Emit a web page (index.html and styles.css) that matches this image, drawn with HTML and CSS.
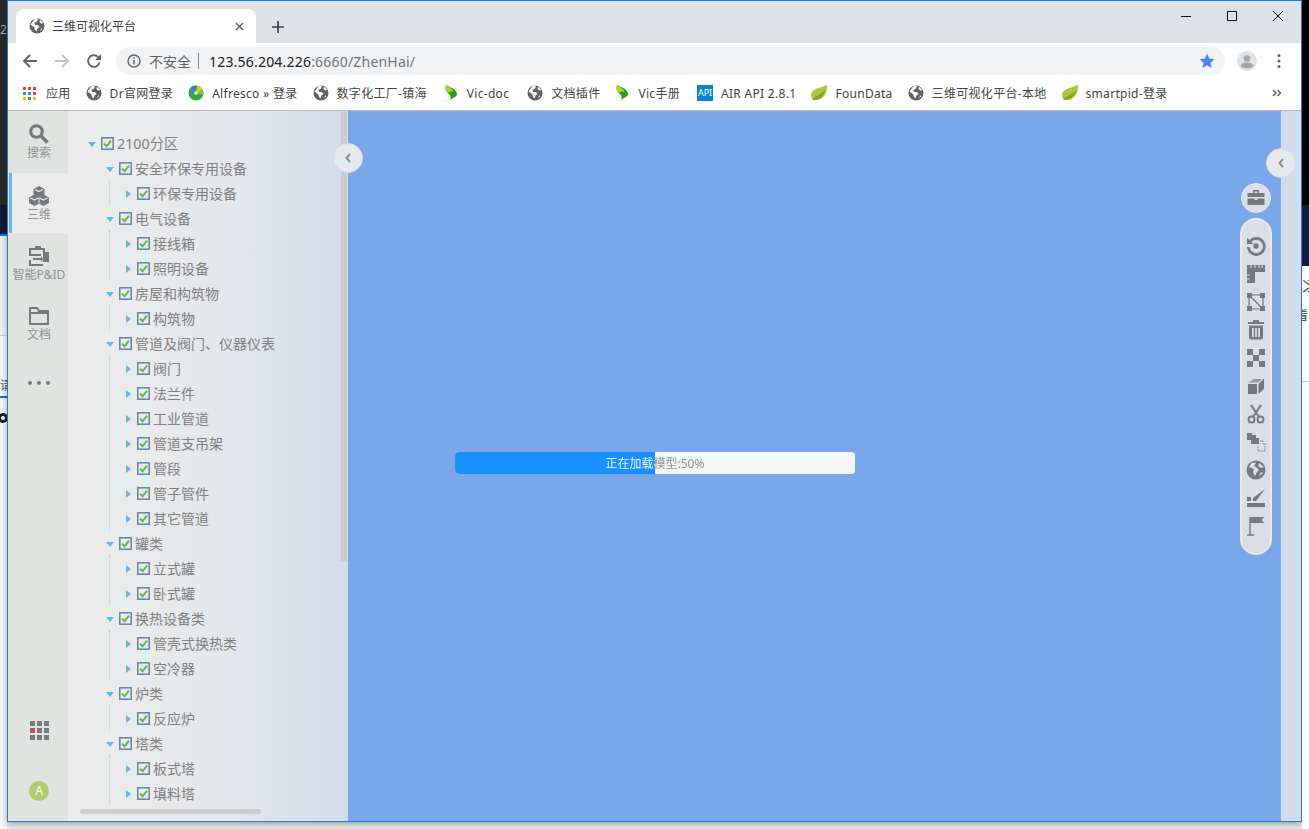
FILE: index.html

```html
<!DOCTYPE html>
<html lang="zh-CN">
<head>
    <meta charset="UTF-8">
    <title>三维可视化平台</title>
    <link rel="stylesheet" href="styles.css">
</head>
<body>
    <svg class="defs">
        <symbol id="globe" viewBox="0 0 16 16">
            <circle cx="8" cy="8" r="7.500" fill="#5f6368"/>
            <path d="M1.500 6.500 5.500 9.500V11l2 2.500 1-3 2-1.500-1.500-2H6l-.5-2L8 3.500l1-2.500-3-.5zM11 1.800 10.500 4l1.500 1.500 2.500-.5zM12.500 10l-1.500 3 2-1.500z" fill="#fff"/>
        </symbol>
        <symbol id="leaf" viewBox="0 0 16 16">
            <path d="M1 15.500h12v.5H1z" fill="#d9dcd6"/>
            <path d="M3 0C7 2 13 4 14 8.500 14.500 12 9 12.500 7 15.500 8.500 12 7.500 10 4.500 8 2.500 6 2 3 3 0z" fill="#2f9a1c"/>
            <path d="M3 0C6 2 10 4 10.500 7 9 6 6.500 6.500 4.500 8 2.500 6 2 3 3 0z" fill="#a5d63c"/>
        </symbol>
        <symbol id="spring" viewBox="0 0 16 16">
            <path d="M16 0C16.500 7 13 15 5 15 2 15 0 14 0 10 0 4 8 3 16 0z" fill="#a9c83c"/>
            <path d="M1 14.500C5 11 10 9 14.500 5 13 11 8 15 3 15z" fill="#7ba428"/>
        </symbol>
        <symbol id="check" viewBox="0 0 13 13">
            <rect x=".8" y=".8" width="11.400" height="11.400" fill="#ececec" stroke="#67809b" stroke-width="1.500"/>
            <path d="M3 6.600 5.600 9.300 10 3.700" fill="none" stroke="#5cb85c" stroke-width="2"/>
        </symbol>
    </svg>

    <div class="desk-left">
        <span class="desk-num">2.</span>
        <span class="desk-word">请</span>
        <span class="desk-radio"></span>
    </div>

    <div class="window">
        <div class="tabstrip">
            <div class="tab">
                <svg class="fav"><use href="#globe"/></svg>
                <span class="tab-title">三维可视化平台</span>
                <svg class="tab-close" viewBox="0 0 10 10"><path d="M1 1 9 9M9 1 1 9" stroke="#5f6368" stroke-width="1.600"/></svg>
            </div>
            <svg class="new-tab" viewBox="0 0 12 12"><path d="M6 0V12M0 6H12" stroke="#3c4043" stroke-width="1.700"/></svg>
            <div class="win-btns">
                <svg viewBox="0 0 12 12"><path d="M1 6.500H11" stroke="#111" stroke-width="1"/></svg>
                <svg viewBox="0 0 12 12"><rect x="1.500" y="1.500" width="9" height="9" fill="none" stroke="#111"/></svg>
                <svg viewBox="0 0 12 12"><path d="M1 1 11 11M11 1 1 11" stroke="#111" stroke-width="1"/></svg>
            </div>
        </div>

        <div class="toolbar">
            <svg class="nav" viewBox="0 0 16 16"><path d="M15 8H2M8 2 2 8l6 6" fill="none" stroke="#5f6368" stroke-width="1.900"/></svg>
            <svg class="nav" viewBox="0 0 16 16"><path d="M1 8H14M8 2l6 6-6 6" fill="none" stroke="#bdc1c6" stroke-width="1.900"/></svg>
            <svg class="nav" viewBox="0 0 16 16"><path d="M13.500 9.500A5.800 5.800 0 1 1 12 4" fill="none" stroke="#5f6368" stroke-width="1.900"/><path d="M15 1v6H9z" fill="#5f6368"/></svg>
            <div class="omnibox">
                <svg class="info" viewBox="0 0 14 14"><circle cx="7" cy="7" r="6" fill="none" stroke="#5f6368" stroke-width="1.400"/><path d="M7 6v4.500M7 3.200v1.600" stroke="#5f6368" stroke-width="1.500"/></svg>
                <span class="insecure">不安全</span>
                <span class="sep"></span>
                <span class="url">123.56.204.226<span class="url-rest">:6660/ZhenHai/</span></span>
                <svg class="star" viewBox="0 0 16 16"><path d="M8 .8 10.200 5.600l5.200.6-3.900 3.500 1.100 5.200L8 12.300l-4.600 2.600 1.100-5.200L.6 6.200l5.200-.6z" fill="#4285f4"/></svg>
            </div>
            <svg class="profile" viewBox="0 0 20 20"><circle cx="10" cy="10" r="10" fill="#dee1e6"/><circle cx="10" cy="7.500" r="3.300" fill="#a3a6aa"/><path d="M3.500 15c1-3 4-3.500 6.500-3.500s5.500.5 6.500 3.500c-1.500 1.500-4 2.300-6.500 2.300S5 16.500 3.500 15z" fill="#a3a6aa"/></svg>
            <svg class="menu" viewBox="0 0 4 16"><circle cx="2" cy="2.500" r="1.500" fill="#5f6368"/><circle cx="2" cy="8" r="1.500" fill="#5f6368"/><circle cx="2" cy="13.500" r="1.500" fill="#5f6368"/></svg>
        </div>

        <div class="bookmarks">
            <a class="bm bm-apps">
                <span class="apps-icon">
                    <i class="c-r"></i><i class="c-r"></i><i class="c-r"></i>
                    <i class="c-g"></i><i class="c-b"></i><i class="c-r"></i>
                    <i class="c-y"></i><i class="c-g"></i><i class="c-y"></i>
                </span>应用
            </a>
            <a class="bm"><svg class="fav"><use href="#globe"/></svg>Dr官网登录</a>
            <a class="bm">
                <svg class="fav" viewBox="0 0 16 16">
                    <circle cx="8" cy="8" r="7.500" fill="#3aa53c"/>
                    <path d="M8 8 3.500 1.500 9 .5z" fill="#2a7ad8"/>
                    <path d="M8 8 9 .5 15 4z" fill="#f2c21a"/>
                    <path d="M8 8 15 4 15.500 10z" fill="#8bc83f"/>
                    <path d="M8 8 1 5 3.500 1.500z" fill="#1f9ad6"/>
                    <circle cx="8" cy="8" r="1.800" fill="#fff"/>
                </svg>Alfresco » 登录
            </a>
            <a class="bm"><svg class="fav"><use href="#globe"/></svg>数字化工厂-镇海</a>
            <a class="bm bm-nudge1"><svg class="fav"><use href="#leaf"/></svg>Vic-doc</a>
            <a class="bm bm-nudge3"><svg class="fav"><use href="#globe"/></svg>文档插件</a>
            <a class="bm bm-back1"><svg class="fav"><use href="#leaf"/></svg>Vic手册</a>
            <a class="bm bm-nudge2"><span class="api-icon">API</span>AIR API 2.8.1</a>
            <a class="bm"><svg class="fav"><use href="#spring"/></svg>FounData</a>
            <a class="bm"><svg class="fav"><use href="#globe"/></svg>三维可视化平台-本地</a>
            <a class="bm"><svg class="fav"><use href="#spring"/></svg>smartpid-登录</a>
            <svg class="bm-more" viewBox="0 0 10 8"><path d="M1 1 4 4 1 7M5.500 1l3 3-3 3" fill="none" stroke="#5f6368" stroke-width="1.500"/></svg>
        </div>

        <div class="app">
            <nav class="rail">
                <div class="rail-item">
                    <svg viewBox="0 0 20 20"><circle cx="7.500" cy="7.500" r="5.800" fill="none" stroke="#75787d" stroke-width="3"/><path d="M11.500 11.500 18.500 18.500" stroke="#75787d" stroke-width="3.500"/></svg>
                    <span>搜索</span>
                </div>
                <div class="rail-item active">
                    <svg viewBox="0 0 20 20" fill="#75787d">
                        <path d="M10 0 15.500 3V8.500L10 11.500 4.500 8.500V3z"/>
                        <path d="M5.500 8.500 11 11.500V17L5.500 20 0 17V11.500z"/>
                        <path d="M14.500 8.500 20 11.500V17L14.500 20 9 17V11.500z"/>
                        <path d="M6 3.500 10 5.500 14 3.500M1.500 12 5.500 14 9 12M10.500 12 14.500 14 18.500 12" fill="none" stroke="#ececec" stroke-width="1.200"/>
                        <path d="M10 11.500V17" stroke="#ececec"/>
                    </svg>
                    <span>三维</span>
                </div>
                <div class="rail-item">
                    <svg viewBox="0 0 20 20" fill="#75787d">
                        <path d="M6 0H12V2H16V8H14V4H2V8H12V10H0V2H6z"/>
                        <path d="M14 6H20V16H14z"/>
                        <path d="M0 14H2V18H14V20H0z"/>
                        <path d="M4 12H12V10L14 13 12 16V14H4z"/>
                    </svg>
                    <span>智能P&amp;ID</span>
                </div>
                <div class="rail-item">
                    <svg viewBox="0 0 20 20" fill="none" stroke="#75787d" stroke-width="2">
                        <path d="M1 2H8L10 5H19V18H1z"/>
                        <path d="M1 7H19"/>
                    </svg>
                    <span>文档</span>
                </div>
                <div class="rail-dots"><i></i><i></i><i></i></div>
                <div class="rail-bottom">
                    <div class="grid-icon">
                        <i></i><i></i><i></i>
                        <i class="red"></i><i></i><i></i>
                        <i></i><i></i><i></i>
                    </div>
                    <div class="avatar">A</div>
                </div>
            </nav>

            <aside class="tree-panel">
                <ul class="tree">
                    <li>
                        <div class="row"><i class="tg open"></i><svg class="cb"><use href="#check"/></svg><span class="root-label">2100分区</span></div>
                        <ul class="lvl1">
                            <li>
                                <div class="row"><i class="tg open"></i><svg class="cb"><use href="#check"/></svg>安全环保专用设备</div>
                                <ul class="lvl2">
                                    <li class="row"><i class="tg"></i><svg class="cb"><use href="#check"/></svg>环保专用设备</li>
                                </ul>
                            </li>
                            <li>
                                <div class="row"><i class="tg open"></i><svg class="cb"><use href="#check"/></svg>电气设备</div>
                                <ul class="lvl2">
                                    <li class="row"><i class="tg"></i><svg class="cb"><use href="#check"/></svg>接线箱</li>
                                    <li class="row"><i class="tg"></i><svg class="cb"><use href="#check"/></svg>照明设备</li>
                                </ul>
                            </li>
                            <li>
                                <div class="row"><i class="tg open"></i><svg class="cb"><use href="#check"/></svg>房屋和构筑物</div>
                                <ul class="lvl2">
                                    <li class="row"><i class="tg"></i><svg class="cb"><use href="#check"/></svg>构筑物</li>
                                </ul>
                            </li>
                            <li>
                                <div class="row"><i class="tg open"></i><svg class="cb"><use href="#check"/></svg>管道及阀门、仪器仪表</div>
                                <ul class="lvl2">
                                    <li class="row"><i class="tg"></i><svg class="cb"><use href="#check"/></svg>阀门</li>
                                    <li class="row"><i class="tg"></i><svg class="cb"><use href="#check"/></svg>法兰件</li>
                                    <li class="row"><i class="tg"></i><svg class="cb"><use href="#check"/></svg>工业管道</li>
                                    <li class="row"><i class="tg"></i><svg class="cb"><use href="#check"/></svg>管道支吊架</li>
                                    <li class="row"><i class="tg"></i><svg class="cb"><use href="#check"/></svg>管段</li>
                                    <li class="row"><i class="tg"></i><svg class="cb"><use href="#check"/></svg>管子管件</li>
                                    <li class="row"><i class="tg"></i><svg class="cb"><use href="#check"/></svg>其它管道</li>
                                </ul>
                            </li>
                            <li>
                                <div class="row"><i class="tg open"></i><svg class="cb"><use href="#check"/></svg>罐类</div>
                                <ul class="lvl2">
                                    <li class="row"><i class="tg"></i><svg class="cb"><use href="#check"/></svg>立式罐</li>
                                    <li class="row"><i class="tg"></i><svg class="cb"><use href="#check"/></svg>卧式罐</li>
                                </ul>
                            </li>
                            <li>
                                <div class="row"><i class="tg open"></i><svg class="cb"><use href="#check"/></svg>换热设备类</div>
                                <ul class="lvl2">
                                    <li class="row"><i class="tg"></i><svg class="cb"><use href="#check"/></svg>管壳式换热类</li>
                                    <li class="row"><i class="tg"></i><svg class="cb"><use href="#check"/></svg>空冷器</li>
                                </ul>
                            </li>
                            <li>
                                <div class="row"><i class="tg open"></i><svg class="cb"><use href="#check"/></svg>炉类</div>
                                <ul class="lvl2">
                                    <li class="row"><i class="tg"></i><svg class="cb"><use href="#check"/></svg>反应炉</li>
                                </ul>
                            </li>
                            <li>
                                <div class="row"><i class="tg open"></i><svg class="cb"><use href="#check"/></svg>塔类</div>
                                <ul class="lvl2">
                                    <li class="row"><i class="tg"></i><svg class="cb"><use href="#check"/></svg>板式塔</li>
                                    <li class="row"><i class="tg"></i><svg class="cb"><use href="#check"/></svg>填料塔</li>
                                </ul>
                            </li>
                        </ul>
                    </li>
                </ul>
                <div class="vscroll"></div>
                <div class="hscroll"></div>
                <button class="collapse collapse-left"><svg viewBox="0 0 6 10"><path d="M5 1 1.500 5 5 9" fill="none" stroke="#8a8d92" stroke-width="2"/></svg></button>
            </aside>

            <main class="canvas">
                <div class="progress">
                    <div class="progress-fill"></div>
                    <span class="progress-text">正在加载模型:50%</span>
                </div>
                <div class="tool-circle">
                    <svg viewBox="0 0 20 20" fill="#75787f"><path d="M7 2H13V5H18.500V9H1.500V5H7zM8.500 3.500V5H11.500V3.500zM1.500 10.500H8.500V12H11.500V10.500H18.500V17H1.500z"/></svg>
                </div>
                <div class="tool-pill">
                    <svg viewBox="0 0 20 20" fill="none" stroke="#75787f" stroke-width="2.800"><path d="M4 5.500A8 8 0 1 1 2.300 11"/><path d="M1 1.500V8H7.500z" fill="#75787f" stroke="none"/><circle cx="10" cy="10" r="2.700" fill="#75787f" stroke="none"/></svg>
                    <svg viewBox="0 0 20 20" fill="#75787f"><path d="M1 1H19V8H9V19H1z"/><path d="M5 1V4M9 1V4M13 1V4M16 1V4M1 11H4M1 15H4" stroke="#dbdee6"/></svg>
                    <svg viewBox="0 0 20 20" fill="#75787f"><path d="M1 1H6V6H1zM14 1H19V6H14zM1 14H6V19H1zM14 14H19V19H14z"/><path d="M3 3H17V17H3zM5 5 15 15" fill="none" stroke="#75787f" stroke-width="1.200"/></svg>
                    <svg viewBox="0 0 20 20" fill="#75787f"><path d="M7 0H13V2H18V4H2V2H7z"/><path d="M3 5.500H17V17.500Q17 19.500 15 19.500H5Q3 19.500 3 17.500zM6 8V17H7.800V8zM9.100 8V17H10.900V8zM12.200 8V17H14V8z" fill-rule="evenodd"/></svg>
                    <svg viewBox="0 0 20 20" fill="#75787f"><path d="M1 1H7V7H1zM13 1H19V7H13zM7 7H13V13H7zM1 13H7V19H1zM13 13H19V19H13z"/></svg>
                    <svg viewBox="0 0 20 20" fill="#75787f"><path d="M2 8H11V18H2z"/><path d="M2.500 6.500 8 3H16L12 6.500z" opacity=".7"/><path d="M12.500 8 18 2.500V13L12.500 18z"/></svg>
                    <svg viewBox="0 0 20 20" fill="none" stroke="#75787f" stroke-width="2"><path d="M5 1 13 13M15 1 7 13"/><circle cx="5.500" cy="15.500" r="3"/><circle cx="14.500" cy="15.500" r="3"/></svg>
                    <svg viewBox="0 0 20 20" fill="#75787f"><path d="M1 1H6V3H10V6H13V12H5V8H1z"/><path d="M14 9H17V12H19V19H12V14" fill="none" stroke="#75787f" stroke-dasharray="1.500 1"/></svg>
                    <svg viewBox="0 0 20 20"><circle cx="10" cy="10" r="9.500" fill="#75787f"/><path d="M3 7 8 9 7 12 9 16 11 12 13 10 10 7 8 6 10 3 6 2.500zM13 3 12 6 15 8 18 7zM15 12 13 16 17 13z" fill="#dbdee6"/></svg>
                    <svg viewBox="0 0 20 20" fill="#75787f"><path d="M1 9H5V13H1zM1 15H19V19H1zM19 1 10 13 7 13 7 10z"/></svg>
                    <svg viewBox="0 0 20 20" fill="#75787f"><path d="M4 1H18L15.500 4 18 7H4z"/><path d="M4 1V19M1 19H8" fill="none" stroke="#75787f" stroke-width="1.400"/></svg>
                </div>
            </main>

            <aside class="side-right">
                <button class="collapse collapse-right"><svg viewBox="0 0 6 10"><path d="M5 1 1.500 5 5 9" fill="none" stroke="#8a8d92" stroke-width="2"/></svg></button>
            </aside>
        </div>
    </div>

    <div class="desk-right">
        <span class="desk-glyph">≫</span>
        <span class="desk-mark">看</span>
    </div>
</body>
</html>
```

FILE: styles.css

```css
html, body {
    margin: 0;
    height: 829px;
    overflow: hidden;
}
body {
    display: flex;
    background: #ececec;
    font-family: "Noto Sans", "Noto Sans CJK SC", sans-serif;
}
ul {
    list-style: none;
    margin: 0;
    padding: 0;
}
.defs {
    display: none;
}

/* desktop behind the window */
.desk-left {
    width: 7px;
    flex: none;
    overflow: hidden;
    font-size: 12px;
    color: #aaa;
    background: linear-gradient(180deg, #2b2b2b 0, #2b2b2b 205px, #14183c 205px, #14183c 234px, #0a7ccb 234px, #0a7ccb 236px, #f1f1f1 236px, #f1f1f1 335px, #cfcfcf 335px, #cfcfcf 336px, #f8f8f8 336px, #f8f8f8 396px, #0a7ccb 396px, #0a7ccb 398px, #f8f8f8 398px);
}
.desk-num {
    display: block;
    margin-top: 22px;
    line-height: 16px;
}
.desk-word {
    display: block;
    margin: 340px 0 0 0;
    line-height: 16px;
    color: #555;
}
.desk-radio {
    display: block;
    width: 10px;
    height: 10px;
    margin: 19px 0 0 -2px;
    box-sizing: border-box;
    border: 3px solid #222;
    border-radius: 50%;
}
.desk-right {
    width: 7px;
    flex: none;
    overflow: hidden;
    background: linear-gradient(180deg, #000 0, #000 205px, #14183c 205px, #14183c 266px, #fff 266px, #fff 381px, #ccc 381px, #ccc 382px, #fff 382px);
}
.desk-glyph {
    display: block;
    margin: 276px 0 0 0;
    font-size: 16px;
    line-height: 20px;
    color: #333;
}
.desk-mark {
    display: block;
    margin: 12px 0 0 -6px;
    font-size: 12px;
    line-height: 16px;
    color: #333;
}

.window {
    width: 1293px;
    height: 820px;
    flex: none;
    display: flex;
    flex-direction: column;
    border: 1px solid #1a7fd0;
    background: #fff;
    box-shadow: 0 2px 7px rgba(0, 0, 0, .35);
}

/* tabs */
.tabstrip {
    height: 42px;
    flex: none;
    display: flex;
    align-items: flex-end;
    padding-left: 8px;
    background: #dee1e6;
}
.tab {
    width: 240px;
    height: 34px;
    box-sizing: border-box;
    display: flex;
    align-items: center;
    padding: 0 10px 0 13px;
    background: #fff;
    border-radius: 8px 8px 0 0;
}
.fav {
    width: 16px;
    height: 16px;
    flex: none;
}
.tab-title {
    margin-left: 7px;
    flex: 1;
    font-size: 12px;
    color: #3c4043;
}
.tab-close {
    width: 9px;
    height: 9px;
    margin-right: 2px;
}
.new-tab {
    width: 12px;
    height: 12px;
    margin: 0 0 10px 16px;
}
.win-btns {
    margin-left: auto;
    align-self: flex-start;
    display: flex;
    gap: 34px;
    padding: 9px 17px 0 0;
}
.win-btns svg {
    width: 12px;
    height: 12px;
}

/* address bar */
.toolbar {
    height: 38px;
    flex: none;
    box-sizing: border-box;
    display: flex;
    align-items: center;
    padding: 0 0 2px 14px;
    background: #fff;
}
.nav {
    width: 16px;
    height: 16px;
    margin-right: 16px;
}
.omnibox {
    width: 1109px;
    height: 28px;
    margin-left: -2px;
    box-sizing: border-box;
    display: flex;
    align-items: center;
    padding: 0 10px 0 11px;
    border-radius: 14px;
    background: #f1f3f4;
}
.info {
    width: 14px;
    height: 14px;
}
.insecure {
    margin-left: 8px;
    font-size: 14px;
    color: #5f6368;
}
.sep {
    width: 1px;
    height: 16px;
    margin: 0 10px 0 7px;
    background: #8a8d91;
}
.url {
    font-size: 14px;
    letter-spacing: .2px;
    color: #202124;
}
.url-rest {
    color: #70757a;
}
.star {
    width: 16px;
    height: 16px;
    margin-left: auto;
}
.profile {
    width: 20px;
    height: 20px;
    margin-left: 12px;
}
.menu {
    width: 4px;
    height: 16px;
    margin-left: 20px;
}

/* bookmarks */
.bookmarks {
    height: 30px;
    flex: none;
    display: flex;
    align-items: center;
    gap: 15px;
    padding: 0 0 5px 15px;
    box-sizing: border-box;
    border-bottom: 1px solid #b9b9b9;
    background: #fff;
    font-size: 12px;
    letter-spacing: .3px;
    color: #444;
}
.bm {
    display: flex;
    align-items: center;
    gap: 8px;
    white-space: nowrap;
}
.bm-apps {
    gap: 10px;
}
.bm-nudge1 {
    margin-left: 1px;
}
.bm-nudge2 {
    margin-left: 2px;
}
.bm-nudge3 {
    margin-left: 3px;
}
.bm-back1 {
    margin-left: -1px;
}
.apps-icon {
    width: 13px;
    height: 13px;
    display: grid;
    grid-template-columns: repeat(3, 3px);
    gap: 2px;
}
.apps-icon i {
    display: block;
}
.c-r { background: #e94335; }
.c-g { background: #34a853; }
.c-b { background: #4285f4; }
.c-y { background: #fbbc05; }
.api-icon {
    width: 16px;
    height: 16px;
    background: #0b85c9;
    color: #fff;
    font-size: 9px;
    letter-spacing: 0;
    line-height: 16px;
    text-align: center;
}
.bm-more {
    width: 10px;
    height: 8px;
    margin-left: auto;
    margin-right: 19px;
}

/* app */
.app {
    flex: 1;
    min-height: 0;
    display: flex;
}
.rail {
    width: 60px;
    flex: none;
    display: flex;
    flex-direction: column;
    background: #dfe4e0;
}
.rail-item {
    height: 60px;
    flex: none;
    box-sizing: border-box;
    display: flex;
    flex-direction: column;
    align-items: center;
    padding: 13px 0 0 2px;
    font-size: 12px;
    line-height: 16px;
    color: #909090;
    white-space: nowrap;
}
.rail-item:first-child {
    height: 62px;
}
.rail-item svg {
    width: 20px;
    height: 20px;
    flex: none;
}
.rail-item span {
    margin-top: 1px;
}
.rail-item.active {
    background: #ececec;
    border-left: 3px solid #62b6dd;
    margin-left: 1px;
    padding: 13px 2px 0 0;
}
.rail-dots {
    height: 60px;
    padding-left: 2px;
    display: flex;
    align-items: center;
    justify-content: center;
    gap: 5px;
}
.rail-dots i {
    width: 4px;
    height: 4px;
    border-radius: 50%;
    background: #777b80;
}
.rail-bottom {
    margin-top: auto;
    display: flex;
    flex-direction: column;
    align-items: center;
    padding: 0 0 20px 2px;
}
.grid-icon {
    display: grid;
    grid-template-columns: repeat(3, 5px);
    gap: 2px;
}
.grid-icon i {
    height: 5px;
    background: #777b80;
}
.grid-icon i.red {
    background: #b5525a;
}
.avatar {
    width: 20px;
    height: 20px;
    margin-top: 41px;
    border-radius: 50%;
    background: #afcc70;
    color: #fff;
    font-size: 12px;
    line-height: 20px;
    text-align: center;
}

/* tree */
.tree-panel {
    width: 280px;
    flex: none;
    position: relative;
    background: linear-gradient(90deg, #ecedec 0, #e4e7eb 60%, #d2dcec 100%);
}
.tree {
    padding: 19px 0 0 20px;
    font-size: 14px;
    color: #808080;
}
.row {
    height: 25px;
    display: flex;
    align-items: center;
}
.root-label {
    font-size: 14.300px;
}
.lvl1 {
    padding-left: 18px;
}
.lvl2 {
    margin-left: 3px;
    padding-left: 14px;
    border-left: 1px dotted #c4c4c4;
}
.tg {
    width: 13px;
    height: 25px;
    flex: none;
    box-sizing: border-box;
    position: relative;
}
.tg::before {
    content: "";
    position: absolute;
    left: 2px;
    top: 10px;
    border-left: 5px solid #5fb8e0;
    border-top: 4.500px solid transparent;
    border-bottom: 4.500px solid transparent;
}
.tg.open::before {
    left: 0;
    top: 12px;
    border-top: 5px solid #5fb8e0;
    border-left: 4px solid transparent;
    border-right: 4px solid transparent;
    border-bottom: 0;
}
.cb {
    width: 13px;
    height: 13px;
    flex: none;
    margin: 2px 3px 0 0;
}
.vscroll {
    position: absolute;
    right: 1px;
    top: 1px;
    width: 6px;
    height: 449px;
    background: #cdcdcd;
}
.hscroll {
    position: absolute;
    left: 12px;
    bottom: 7px;
    width: 181px;
    height: 5px;
    border-radius: 3px;
    background: #cdcdcd;
}
.collapse {
    position: absolute;
    width: 30px;
    height: 30px;
    padding: 0;
    box-sizing: border-box;
    display: flex;
    align-items: center;
    justify-content: center;
    border: 1px solid #dcdcdc;
    border-radius: 50%;
    background: #e8e9ec;
}
.collapse svg {
    width: 6px;
    height: 10px;
}
.collapse-left {
    right: -15px;
    top: 32px;
    z-index: 2;
}
.collapse-right {
    left: -15px;
    top: 37px;
}

/* 3d canvas */
.canvas {
    flex: 1;
    position: relative;
    background: #7aa6ea;
}
.progress {
    position: absolute;
    left: 107px;
    top: 341px;
    width: 400px;
    height: 22px;
    border-radius: 4px;
    overflow: hidden;
    background: #f5f5f5;
}
.progress-fill {
    width: 50%;
    height: 100%;
    background: #1890ff;
}
.progress-text {
    position: absolute;
    inset: 0;
    font-size: 12px;
    line-height: 23px;
    text-align: center;
    color: transparent;
    background: linear-gradient(90deg, #fff 50%, #8c8c8c 50%);
    -webkit-background-clip: text;
    background-clip: text;
}
.tool-circle {
    position: absolute;
    left: 893px;
    top: 72px;
    width: 30px;
    height: 30px;
    box-sizing: border-box;
    display: flex;
    align-items: center;
    justify-content: center;
    border-radius: 50%;
    border: 1px solid #e8eaee;
    background: #dbdee6;
}
.tool-circle svg {
    width: 20px;
    height: 20px;
}
.tool-pill {
    position: absolute;
    left: 892px;
    top: 107px;
    width: 32px;
    height: 337px;
    box-sizing: border-box;
    display: flex;
    flex-direction: column;
    align-items: center;
    padding-top: 12px;
    border: 2px solid #e8eaee;
    border-radius: 16px;
    background: #dbdee6;
}
.tool-pill svg {
    width: 20px;
    height: 20px;
    margin: 4px 0;
    flex: none;
}
.side-right {
    width: 20px;
    flex: none;
    position: relative;
    background: #d2dcec;
}
```
